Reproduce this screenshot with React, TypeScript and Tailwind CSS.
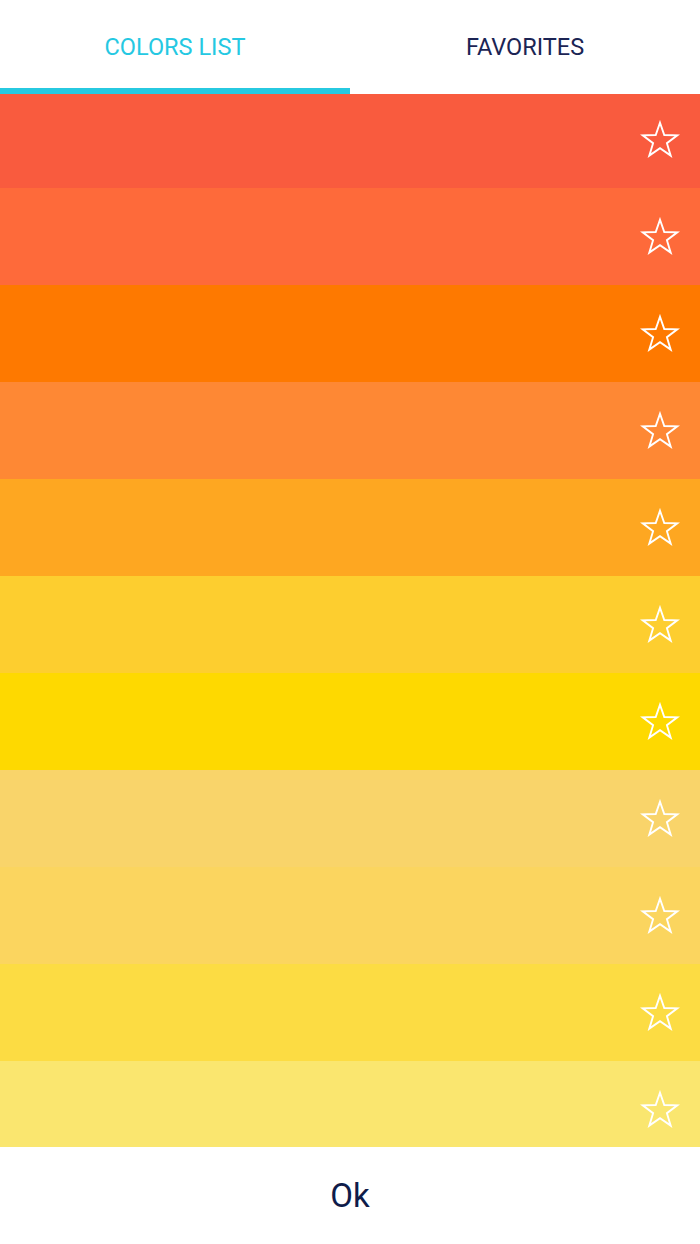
import React from 'react'

const ROWS = [
  '#f95b3e',
  '#fe6a3a',
  '#fe7900',
  '#fe8834',
  '#fea721',
  '#fdce2f',
  '#fed900',
  '#f9d46a',
  '#fbd55f',
  '#fcdc43',
  '#fae66f',
]

function StarOutline() {
  return (
    <svg width="40" height="40" viewBox="-2 -2 44 44" fill="none">
      <polygon
        points="20,1 24.7,14.53 39.02,14.82 27.61,23.47 31.76,37.18 20,29 8.24,37.18 12.39,23.47 0.98,14.82 15.3,14.53"
        stroke="#ffffff"
        strokeWidth="2.1"
        strokeLinejoin="miter"
      />
    </svg>
  )
}

export default function App() {
  return (
    <div className="flex h-[1244px] w-[700px] flex-col overflow-hidden bg-white font-['Roboto',sans-serif]">
      {/* Tabs */}
      <div className="relative z-10 flex h-[94px] shrink-0 flex-col bg-white">
        <div className="flex flex-1">
          <div className="flex w-1/2 items-center justify-center pt-[8px] text-[23.5px] text-[#25c8e2]">
            COLORS LIST
          </div>
          <div className="flex w-1/2 items-center justify-center pt-[8px] text-[23.5px] text-[#1b2454]">
            FAVORITES
          </div>
        </div>
        <div className="flex h-[6px]">
          <div className="w-1/2 bg-[#27c9e0]" />
        </div>
      </div>

      {/* Color list */}
      <div className="flex-1 overflow-hidden">
        <div className="-mt-[3px] flex flex-col">
          {ROWS.map((c) => (
            <div
              key={c}
              className="flex h-[97px] shrink-0 items-center justify-end pr-[20px]"
              style={{ backgroundColor: c }}
            >
              <StarOutline />
            </div>
          ))}
        </div>
      </div>

      {/* Footer */}
      <div className="flex h-[97px] shrink-0 items-center justify-center bg-white">
        <span className="text-[33px] text-[#0f1c4a]">Ok</span>
      </div>
    </div>
  )
}
